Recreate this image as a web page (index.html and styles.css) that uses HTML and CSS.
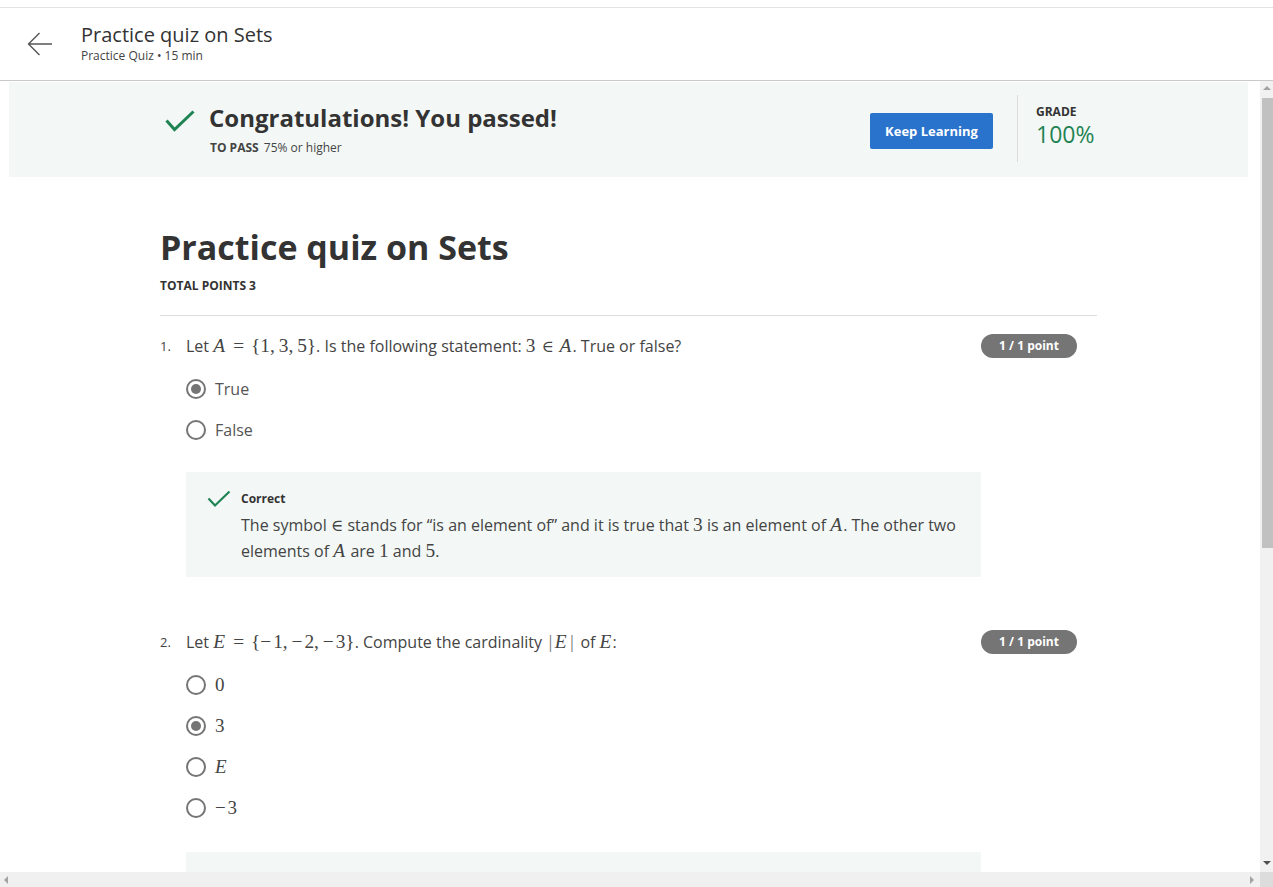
FILE: index.html
```html
<!DOCTYPE html>
<html lang="en">
<head>
<meta charset="utf-8">
<title>Practice quiz on Sets</title>
<link rel="stylesheet" href="styles.css">
</head>
<body>
<div class="top-strip"></div>
<header class="header">
  <div class="back">
    <svg width="26" height="24" viewBox="0 0 26 24"><path d="M25 12H1.5M12.5 1L1.5 12L12.5 23" fill="none" stroke="#555" stroke-width="1.4"/></svg>
  </div>
  <div class="header-text">
    <div class="header-title">Practice quiz on Sets</div>
    <div class="header-sub">Practice Quiz • 15 min</div>
  </div>
</header>
<div class="viewport">
  <div class="viewport-row">
    <main class="scroll-content">
      <section class="banner">
        <div class="banner-inner">
          <div class="banner-left">
            <svg class="pass-check" width="30" height="22" viewBox="0 0 30 22"><path d="M1.5 10.5L9.5 19.5L28.5 1.5" fill="none" stroke="#1f8354" stroke-width="3"/></svg>
            <div>
              <div class="pass-title">Congratulations! You passed!</div>
              <div class="pass-sub"><b>TO PASS</b> 75% or higher</div>
            </div>
          </div>
          <div class="banner-right">
            <button class="keep-btn">Keep Learning</button>
            <div class="divider"></div>
            <div class="grade">
              <div class="grade-label">GRADE</div>
              <div class="grade-value">100%</div>
            </div>
          </div>
        </div>
      </section>

      <div class="column">
        <h1 class="quiz-title">Practice quiz on Sets</h1>
        <div class="total-points">TOTAL POINTS 3</div>
        <hr class="rule">

        <div class="question">
          <div class="q-row">
            <span class="q-num">1.</span>
            <span class="q-text">Let <span class="m"><i>A</i><span class="op">=</span>{1,&thinsp;3,&thinsp;5}</span>. Is the following statement: <span class="m">3<span class="op sm">∈</span><i>A</i></span>. True or false?</span>
            <span class="badge">1 / 1 point</span>
          </div>
          <div class="q-body">
            <div class="option"><span class="radio checked"></span><span class="opt-label">True</span></div>
            <div class="option"><span class="radio"></span><span class="opt-label">False</span></div>
            <div class="feedback">
              <svg class="fb-check" width="24" height="18" viewBox="0 0 24 18"><path d="M1.5 8.5L8 15.5L22.5 1.5" fill="none" stroke="#1f8354" stroke-width="2.2"/></svg>
              <div>
                <div class="fb-title">Correct</div>
                <p class="fb-text">The symbol <span class="m sm">∈</span> stands for “is an element of” and it is true that <span class="m">3</span> is an element of <span class="m"><i>A</i></span>. The other two elements of <span class="m"><i>A</i></span> are <span class="m">1</span> and <span class="m">5</span>.</p>
              </div>
            </div>
          </div>
        </div>

        <div class="question q2">
          <div class="q-row">
            <span class="q-num">2.</span>
            <span class="q-text">Let <span class="m"><i>E</i><span class="op">=</span>{<span class="mn">−</span>1,&thinsp;<span class="mn">−</span>2,&thinsp;<span class="mn">−</span>3}</span>. Compute the cardinality <span class="m"><span class="bar">|</span><i>E</i><span class="bar">|</span></span> of <span class="m"><i>E</i></span>:</span>
            <span class="badge">1 / 1 point</span>
          </div>
          <div class="q-body">
            <div class="option"><span class="radio"></span><span class="opt-label m">0</span></div>
            <div class="option"><span class="radio checked"></span><span class="opt-label m">3</span></div>
            <div class="option"><span class="radio"></span><span class="opt-label m"><i>E</i></span></div>
            <div class="option"><span class="radio"></span><span class="opt-label m"><span class="mn">−</span>3</span></div>
            <div class="feedback feedback-tall"></div>
          </div>
        </div>
      </div>
    </main>
    <div class="vscroll">
      <div class="arrow-up"></div>
      <div class="thumb"></div>
      <div class="vspace"></div>
      <div class="arrow-down"></div>
    </div>
  </div>
  <div class="hscroll">
    <div class="arrow-left"></div>
    <div class="hspace"></div>
    <div class="arrow-right"></div>
    <div class="corner"></div>
  </div>
</div>
</body>
</html>
```
FILE: styles.css
```css
* { box-sizing: border-box; }
html, body { margin: 0; padding: 0; }
body {
  width: 1273px;
  height: 887px;
  overflow: hidden;
  background: #fff;
  font-family: "Open Sans", "Noto Sans", sans-serif;
  color: #373a3c;
}
.top-strip {
  height: 8px;
  border-bottom: 1px solid #e3e3e3;
}
.header {
  height: 73px;
  border-bottom: 1px solid #c9c9c9;
  display: flex;
  align-items: flex-start;
}
.back {
  width: 81px;
  padding: 24px 0 0 27px;
  line-height: 0;
}
.header-text { padding-top: 14px; }
.header-title {
  font-size: 20px;
  line-height: 26px;
  color: #333;
}
.header-sub {
  font-size: 12px;
  line-height: 16px;
  color: #444;
}
.viewport {
  height: 806px;
  display: flex;
  flex-direction: column;
}
.viewport-row {
  height: 791px;
  display: flex;
}
.scroll-content {
  flex: 1;
  overflow: hidden;
  padding-top: 1px;
}
.banner {
  margin: 0 12px 0 9px;
  height: 95px;
  background: #f3f8f6;
}
.banner-inner {
  width: 937px;
  margin-left: 151px;
  display: flex;
  justify-content: space-between;
  height: 95px;
}
.banner-left {
  display: flex;
  padding-top: 20px;
}
.pass-check {
  margin: 8px 14px 0 5px;
}
.pass-title {
  font-size: 24px;
  line-height: 32px;
  font-weight: 700;
  color: #333;
}
.pass-sub {
  margin-top: 6px;
  font-size: 12px;
  line-height: 16px;
  color: #444;
  padding-left: 1px;
}
.pass-sub b { margin-right: 2px; }
.banner-right {
  display: flex;
  align-items: flex-start;
}
.keep-btn {
  margin-top: 31px;
  width: 123px;
  height: 36px;
  background: #2a73cc;
  border: none;
  border-radius: 2px;
  color: #fff;
  font-family: inherit;
  font-size: 13px;
  font-weight: 700;
  padding: 0;
}
.divider {
  width: 1px;
  height: 67px;
  margin: 13px 18px 0 24px;
  background: #dcdcdc;
}
.grade { padding-top: 22px; width: 61px; }
.grade-label {
  font-size: 12px;
  line-height: 16px;
  font-weight: 700;
  color: #333;
}
.grade-value {
  font-size: 23px;
  line-height: 28px;
  color: #1f8354;
  white-space: nowrap;
}
.column {
  width: 937px;
  margin-left: 160px;
}
.quiz-title {
  margin: 48px 0 0;
  font-size: 34px;
  line-height: 44px;
  font-weight: 700;
  color: #333;
}
.total-points {
  margin-top: 9px;
  font-size: 12px;
  line-height: 16px;
  font-weight: 700;
  color: #333;
}
.rule {
  margin: 21px 0 0;
  border: none;
  border-top: 1px solid #ddd;
  height: 0;
}
.question { margin-top: 18px; }
.q2 { margin-top: 53px; }
.q-row {
  display: flex;
  align-items: center;
  height: 24px;
}
.q-num {
  width: 26px;
  font-size: 13px;
  color: #444;
}
.q-text {
  flex: 1;
  font-size: 16px;
  color: #444;
  white-space: nowrap;
}
.badge {
  width: 96px;
  height: 24px;
  margin-right: 20px;
  border-radius: 12px;
  background: #757575;
  color: #fff;
  font-size: 12px;
  font-weight: 700;
  text-align: center;
  line-height: 24px;
}
.m {
  font-family: "Liberation Serif", "DejaVu Serif", serif;
  font-size: 1.21em;
}
.m i { font-style: italic; padding-right: 0.06em; }
.op { margin: 0 0.36em; }
.mn { margin-right: 0.1em; }
.sm { font-size: 0.85em; }
.m.sm { font-size: 1.05em; }
.bar { color: #777; margin: 0 0.12em; }
.q-body {
  margin: 10px 116px 0 26px;
}
.option {
  display: flex;
  align-items: center;
  height: 41px;
}
.radio {
  width: 20px;
  height: 20px;
  border: 2px solid #757575;
  border-radius: 50%;
  margin-right: 9px;
  position: relative;
  flex: none;
}
.radio.checked::after {
  content: "";
  position: absolute;
  left: 3px;
  top: 3px;
  width: 10px;
  height: 10px;
  border-radius: 50%;
  background: #757575;
}
.opt-label {
  font-size: 16px;
  color: #555;
}
.opt-label.m { font-size: 19px; color: #444; }
.feedback {
  margin-top: 22px;
  background: #f3f8f6;
  display: flex;
  padding: 19px 10px 13px 21px;
}
.fb-check { margin: -1px 10px 0 0; flex: none; }
.fb-title {
  font-size: 12px;
  line-height: 16px;
  font-weight: 700;
  color: #333;
}
.fb-text {
  margin: 5px 0 0;
  font-size: 16px;
  line-height: 26px;
  color: #444;
}
.fb-text .m { line-height: 20px; }
.feedback-tall { margin-top: 24px; height: 120px; }
.vscroll {
  width: 13px;
  background: #f1f1f1;
  display: flex;
  flex-direction: column;
  align-items: center;
}
.arrow-up {
  margin-top: 5px;
  width: 0; height: 0;
  border-left: 4px solid transparent;
  border-right: 4px solid transparent;
  border-bottom: 4px solid #a3a3a3;
  margin-bottom: 8px;
}
.thumb {
  align-self: flex-end;
  width: 11px;
  height: 450px;
  background: #c1c1c1;
}
.vspace { flex: 1; }
.arrow-down {
  width: 0; height: 0;
  border-left: 4px solid transparent;
  border-right: 4px solid transparent;
  border-top: 4px solid #505050;
  margin-bottom: 7px;
}
.hscroll {
  height: 15px;
  background: #f0f0f0;
  display: flex;
  align-items: center;
}
.arrow-left {
  margin-left: 4px;
  width: 0; height: 0;
  border-top: 4px solid transparent;
  border-bottom: 4px solid transparent;
  border-right: 4px solid #a3a3a3;
}
.hspace { flex: 1; }
.arrow-right {
  margin-right: 6px;
  width: 0; height: 0;
  border-top: 4px solid transparent;
  border-bottom: 4px solid transparent;
  border-left: 4px solid #a3a3a3;
}
.corner {
  width: 13px;
  height: 15px;
  background: #dcdcdc;
}
```
